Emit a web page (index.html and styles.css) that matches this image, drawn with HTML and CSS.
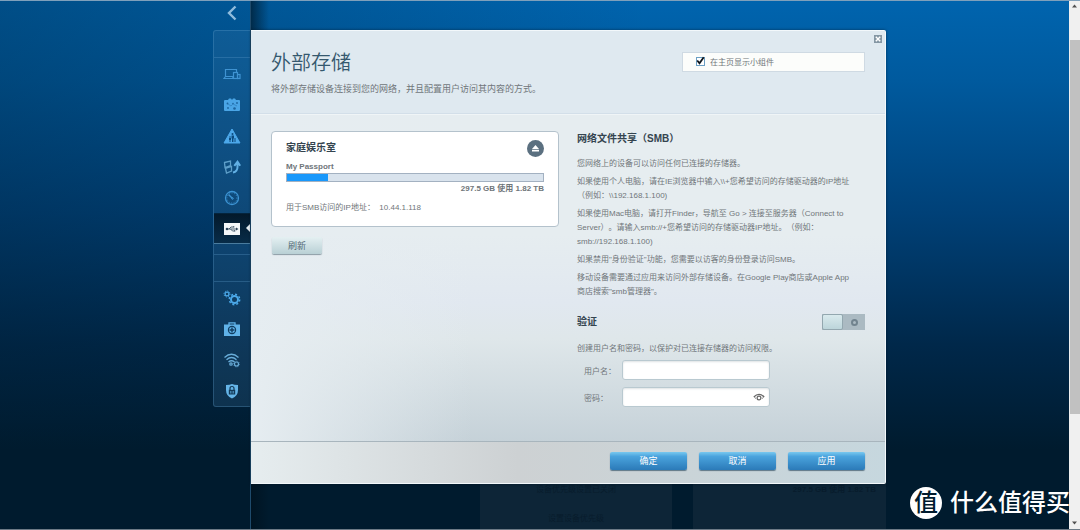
FILE: index.html
```html
<!DOCTYPE html>
<html lang="zh-CN">
<head>
<meta charset="utf-8">
<title>外部存储</title>
<link rel="stylesheet" href="styles.css">
</head>
<body>
<div class="page">
  <aside class="side">
    <button class="collapse" aria-label="收起">
      <svg width="10" height="16" viewBox="0 0 10 16"><path d="M8.500 1.500 2 8l6.500 6.500" fill="none" stroke="#8fbcdc" stroke-width="2.400"/></svg>
    </button>
    <nav class="rail">
      <div class="rail-blank"></div>
      <a class="item" href="#" aria-label="设备列表"><svg width="18" height="14" viewBox="0 0 18 14" fill="none" stroke="#3f93d2" stroke-width="1.200"><path d="M2.500 9.500v-7h11V5M1 11.500h9.500l-1-2h-7z"/><rect x="10.500" y="5.500" width="4" height="6"/><rect x="14.500" y="7.500" width="2.500" height="4"/></svg></a>
      <a class="item" href="#" aria-label="访客访问"><svg width="18" height="16" viewBox="0 0 18 16"><path d="M1 4q0-1 1-1h3l1-1.500h2L9 3l1-1.500h2L13 3h3q1 0 1 1v9q0 1-1 1H2q-1 0-1-1z" fill="#4aa5e6"/><g fill="#1c649f"><circle cx="4.500" cy="6.500" r=".9"/><circle cx="10" cy="6.500" r=".8"/><circle cx="14" cy="6" r=".9"/><circle cx="5" cy="11" r=".9"/><circle cx="11.500" cy="11.500" r="1.300"/></g><path d="m5 7 3 2 2-2m0 0 4 2" fill="none" stroke="#2d7dbc" stroke-width=".7"/></svg></a>
      <a class="item" href="#" aria-label="家长控制"><svg width="18" height="16" viewBox="0 0 18 16"><path d="M9 1 17 15H1z" fill="#4ca8ea" stroke="#4ca8ea" stroke-linejoin="round"/><g fill="#0c4b7e"><circle cx="9.500" cy="6" r="1"/><path d="M8.500 7.500h2.500v3h-.6V14H9v-3.500h-.5zM6 10h2v2h-.5v2h-1v-2H6zM11.500 10h1v4h-1z"/><circle cx="7" cy="9" r=".8"/></g></svg></a>
      <a class="item" href="#" aria-label="媒体优先级"><svg width="18" height="16" viewBox="0 0 18 16" fill="none"><path d="m1.500 3.500 6-1.500v4.500l-5.500 2zM2.500 9.500l6-2v4.500l-5 2z" stroke="#5e9fc9" stroke-width="1.300"/><path d="M10 13.500q4.500-1 4.500-5.500V4m-3.200 2.800 3.200-4 2.700 4" stroke="#62b0e4" stroke-width="2"/></svg></a>
      <a class="item" href="#" aria-label="网速测试"><svg width="16" height="16" viewBox="0 0 16 16" fill="none" stroke="#3d94d4"><circle cx="8" cy="8" r="6.500" stroke-width="1.300"/><circle cx="8" cy="8" r="5" stroke-dasharray="1 1.500" stroke-width=".8"/><path d="m4.500 4.500 4 4" stroke-width="1.400"/><circle cx="8.500" cy="8.500" r=".8"/></svg></a>
      <a class="item active" href="#" aria-label="外部存储" aria-current="page"><svg width="16" height="12" viewBox="0 0 16 12"><path d="M0 0h16v12H0z" fill="#f4f7f9"/><g fill="none" stroke="#3a5063"><path d="M3 6h9M5 6l2-2h2M6.500 6l2 2h1.500" stroke-width=".9"/></g><g fill="#2b4256"><circle cx="3" cy="6" r="1.300"/><path d="m12 4.500 2.500 1.500-2.500 1.500zM9 3.300h1.300v1.300H9zM10 7.300h1.300v1.300H10z"/></g></svg></a>
      <div class="rail-gap"></div>
      <div class="rail-blank"></div>
      <a class="item" href="#" aria-label="连接"><svg width="18" height="16" viewBox="0 0 18 16" fill="none" stroke="#4ba8e8"><circle cx="4" cy="4" r="1.900" stroke-width="1.200"/><circle cx="4" cy="4" r="3" stroke-width="1" stroke-dasharray="1.200 1.150"/><circle cx="11.500" cy="9.500" r="3.500" stroke-width="2"/><circle cx="11.500" cy="9.500" r="5.200" stroke-width="1.500" stroke-dasharray="2 2.080"/></svg></a>
      <a class="item" href="#" aria-label="故障排除"><svg width="16" height="14" viewBox="0 0 16 14"><path d="M5 3V.8h6V3" fill="none" stroke="#60b2e8" stroke-width="1.300"/><path d="M0 2.500h16V14H0z" fill="#60b2e8"/><circle cx="8" cy="8" r="4.200" fill="#103d60"/><circle cx="8" cy="8" r="3" fill="#60b2e8"/><path d="M8 5.500v5M5.500 8h5" stroke="#103d60" stroke-width="1.400"/></svg></a>
      <a class="item" href="#" aria-label="无线"><svg width="18" height="16" viewBox="0 0 18 16" fill="none" stroke="#68acd8" stroke-width="1.300"><path d="M1.500 5.500q7-6.500 14 0M3.500 7.800q5-4.500 10 0M5.500 10q3-2.600 6 0"/><circle cx="8" cy="12" r="1.200"/><circle cx="13.500" cy="12" r="2" stroke-width="1.200"/><circle cx="13.500" cy="12" r="2.900" stroke-width=".7" stroke-dasharray="1.200 1"/></svg></a>
      <a class="item" href="#" aria-label="安全"><svg width="14" height="16" viewBox="0 0 14 16"><path d="M1 2q4 0 6-1 2 1 6 1v5q0 6-6 8.500Q1 13 1 7z" fill="#65b5e8"/><path d="M5 7V5.500q0-2 2-2t2 2V7" fill="none" stroke="#123a58" stroke-width="1.200"/><path d="M3.800 6.800h6.400v4.700H3.800z" fill="#123a58"/><path d="M7 8v2.500M5.500 8v2.500M8.500 8v2.500" stroke="#65b5e8" stroke-width=".6"/></svg></a>
    </nav>
  </aside>

  <div class="main">
    <main class="panel">
      <header class="head">
        <div>
          <h1>外部存储</h1>
          <p class="lead">将外部存储设备连接到您的网络，并且配置用户访问其内容的方式。</p>
        </div>
        <label class="widget"><input type="checkbox" checked><svg class="tick" width="9" height="9" viewBox="0 0 9 9"><path d="m1.200 4.500 2.300 2.700 4.200-6" fill="none" stroke="#10161c" stroke-width="1.800"/></svg><span>在主页显示小组件</span></label>
        <button class="close" aria-label="关闭"><svg width="8" height="8" viewBox="0 0 8 8"><path d="M0 0h8v8H0z" fill="#8597a4"/><path d="m1.800 1.800 4.400 4.400m0-4.400L1.800 6.200" stroke="#fff" stroke-width="1.400"/></svg></button>
      </header>

      <div class="content">
        <section>
          <div class="drive">
            <div class="drive-top">
              <h2>家庭娱乐室</h2>
              <button class="eject" aria-label="弹出"><svg width="9" height="9" viewBox="0 0 9 9" fill="#fff"><path d="M4.500 1 8 5H1zM1 5.700h7v1.800H1z"/></svg></button>
            </div>
            <p class="name">My Passport</p>
            <div class="bar"><div class="fill" style="width:16%"></div></div>
            <p class="usage">297.5 GB 使用 1.82 TB</p>
            <p class="ip">用于SMB访问的IP地址：&nbsp; <span>10.44.1.118</span></p>
          </div>
          <button class="refresh">刷新</button>
        </section>

        <section class="info">
          <h2>网络文件共享（SMB）</h2>
          <p>您网络上的设备可以访问任何已连接的存储器。</p>
          <p>如果使用个人电脑，请在IE浏览器中输入\\+您希望访问的存储驱动器的IP地址<br>（例如：\\192.168.1.100)</p>
          <p>如果使用Mac电脑，请打开Finder，导航至 Go &gt; 连接至服务器（Connect to<br>Server）。请输入smb://+您希望访问的存储驱动器IP地址。（例如：<br>smb://192.168.1.100)</p>
          <p>如果禁用"身份验证"功能，您需要以访客的身份登录访问SMB。</p>
          <p>移动设备需要通过应用来访问外部存储设备。在Google Play商店或Apple App<br>商店搜索"smb管理器"。</p>
          <div class="auth">
            <h2 id="auth">验证</h2>
            <button class="switch" role="switch" aria-checked="false" aria-labelledby="auth"><span class="knob"></span><span class="off"><i></i></span></button>
          </div>
          <p class="hint">创建用户名和密码，以保护对已连接存储器的访问权限。</p>
          <div class="field"><label for="user">用户名：</label><input id="user" type="text"></div>
          <div class="field"><label for="pass">密码：</label><span class="pass"><input id="pass" type="password"><button class="eye" aria-label="显示密码"><svg width="12" height="9" viewBox="0 0 12 9" fill="none" stroke="#666"><path d="M.8 4Q6-1.200 11.200 4" stroke-width="1.300"/><circle cx="6" cy="5" r="1.900" stroke-width="1.200"/><path d="m1.500 4.500 1.500 1m7.500-1-1.500 1" stroke-width=".8"/></svg></button></span></div>
        </section>
      </div>

      <footer class="foot">
        <button>确定</button><button>取消</button><button>应用</button>
      </footer>
    </main>
    <div class="behind">
      <div class="tile"><p>设备优先级设置已关闭</p><p>设置设备优先级</p></div>
      <div class="tile right"><p>297.5 GB 使用 1.82 TB</p></div>
    </div>
  </div>

  <div class="scroll">
    <svg width="11" height="10" viewBox="0 0 11 10"><path d="m3 6.500 2.500-3 2.500 3z" fill="#505050"/></svg>
    <div class="thumb"></div>
    <svg width="11" height="10" viewBox="0 0 11 10"><path d="m3 3.500 2.500 3 2.500-3z" fill="#505050"/></svg>
  </div>
  <div class="mark"><span class="logo">值</span><span>什么值得买</span></div>
</div>
</body>
</html>
```

FILE: styles.css
```css
* { box-sizing: border-box; }
body {
  margin: 0;
  font-family: "Liberation Sans", "Noto Sans CJK SC", sans-serif;
  font-size: 8px;
  text-spacing-trim: space-all;
  color: #70767a;
}
h1, h2, p { margin: 0; }
button { font: inherit; padding: 0; border: 0; cursor: pointer; }
svg { display: block; }

.page {
  position: relative;
  min-height: 100vh;
  overflow: hidden;
  display: grid;
  grid-template-columns: minmax(0, 213fr) 38px minmax(0, 635fr) minmax(0, 183fr) 11px;
  background:
    linear-gradient(90deg, rgba(0, 27, 46, .3), rgba(0, 27, 46, 0) 60%),
    linear-gradient(#0064ae 0, #005a9e 15%, #004178 40%, #00284a 65%, #001b2e 85%);
  border-top: 1px solid #7fa0bb;
  border-bottom: 1px solid #6d7a86;
}

.side { grid-column: 2; border-right: 1px solid #1e4a6b; }
.collapse {
  display: flex;
  align-items: center;
  justify-content: center;
  width: 100%;
  height: 29px;
  padding-bottom: 6px;
  background: none;
}
.rail {
  border: 1px solid rgba(100, 160, 205, .3);
  border-right: 0;
  border-radius: 3px 0 0 3px;
  background: rgba(70, 130, 175, .2);
}
.rail-blank { height: 27px; border-bottom: 1px solid rgba(100, 160, 205, .3); }
.rail-gap { height: 11px; border-bottom: 1px solid rgba(100, 160, 205, .3); }
.item { display: flex; align-items: center; justify-content: center; height: 31px; }
.item.active {
  position: relative;
  background: linear-gradient(#03192b, #082c48);
  border-top: 1px solid #04243d;
  border-bottom: 1px solid #4a7c9e;
}
.item.active::after {
  content: "";
  position: absolute;
  right: 0;
  top: 10px;
  border: 4px solid transparent;
  border-right-color: #e6edf1;
  border-left: 0;
}

.main {
  grid-column: 3;
  display: flex;
  flex-direction: column;
  padding-top: 29px;
  background: linear-gradient(90deg, rgba(0, 15, 25, .6), rgba(0, 15, 25, 0) 18px);
}
.panel {
  position: relative;
  border: 1px solid #f3f8fb;
  border-left: 0;
  border-radius: 0 2px 2px 0;
  box-shadow: 0 0 3px rgba(0, 20, 35, .6);
  background:
    linear-gradient(90deg, #e6edf1, rgba(230, 237, 241, 0) 35%),
    linear-gradient(#e6edf0 0, #e6edf0 45%, #e1e8f0 60%, #dfe7ea 68%, #c5d1d8 91%, #c5d1d8 100%);
}
.head {
  display: flex;
  justify-content: space-between;
  align-items: flex-start;
  height: 83px;
  padding: 18px 20px 0;
  background: #dfe9f0;
  border-bottom: 1px solid #d3dfe9;
  box-shadow: 0 1px #f0f5f7;
}
h1 {
  font-weight: 350;
  font-size: 20px;
  line-height: 28px;
  color: #35586e;
}
.lead { font-size: 9px; line-height: 24px; }
.widget {
  position: relative;
  display: flex;
  align-items: center;
  gap: 5px;
  width: 183px;
  height: 20px;
  margin-top: 3px;
  padding: 0 0 2px 13px;
  background: #fcfdfb;
  border: 1px solid #cfdae3;
}
.widget input {
  appearance: none;
  width: 9px;
  height: 9px;
  margin: 0;
  background: #fff;
  border: 1px solid #6b9fc4;
}
.tick { position: absolute; left: 13px; top: 3px; pointer-events: none; }
.close { position: absolute; right: 3px; top: 4px; background: none; }

.content {
  display: grid;
  grid-template-columns: minmax(0, 1fr) minmax(0, 1fr);
  gap: 18px;
  padding: 17px 20px 27px;
}
h2 { font-size: 10px; line-height: 16px; color: #34444f; }
.drive {
  height: 96px;
  padding: 8px 14px;
  background: #fff;
  border: 1px solid #b4c2cc;
  border-radius: 4px;
}
.drive-top { display: flex; justify-content: space-between; }
.eject {
  display: grid;
  place-items: center;
  width: 17px;
  height: 17px;
  border-radius: 50%;
  background: #5b7080;
}
.name, .usage { font-weight: bold; line-height: 14px; }
.name { margin-top: 4px; line-height: 12px; }
.bar { height: 9px; background: #d9e3ed; border: 1px solid #a3b1c1; }
.fill { height: 100%; background: #1998fb; }
.usage { text-align: right; }
.ip { margin-top: 5px; line-height: 14px; }
.refresh {
  width: 50px;
  height: 17px;
  margin: 10px 0 0 1px;
  font-size: 9px;
  line-height: 16px;
  color: #536a77;
  border-radius: 2px;
  background: linear-gradient(#e4f0f2, #b9d0d5);
  box-shadow: 0 1px 1px #8b9ca5;
}
.info > p { margin-top: 4px; line-height: 14px; white-space: nowrap; }
.info > h2 { margin-bottom: 10px; }
.auth {
  display: flex;
  justify-content: space-between;
  align-items: center;
  margin-top: 15px;
}
.switch {
  display: flex;
  width: 43px;
  height: 16px;
  background: #abbac2;
}
.knob {
  width: 21px;
  height: 16px;
  border: 1px solid #93a7af;
  border-radius: 2px;
  background: linear-gradient(#d9eaed, #bcd5da);
}
.off { flex: 1; display: grid; place-items: center; height: 16px; }
.off i { width: 7px; height: 7px; border: 2px solid #71838e; border-radius: 50%; }
.info > .hint { margin: 12px 0 4px; }
.field {
  display: grid;
  grid-template-columns: 38px 148px;
  align-items: center;
  margin: 0 0 7px 7px;
}
.field input {
  display: block;
  width: 100%;
  height: 20px;
  padding: 0 6px;
  font: inherit;
  background: #fff;
  border: 1px solid #b9c9d0;
  border-radius: 3px;
  box-shadow: inset 0 1px 2px rgba(90, 110, 120, .2);
}
.pass { position: relative; }
.eye { position: absolute; right: 5px; top: 6px; background: none; }

.foot {
  display: flex;
  justify-content: flex-end;
  gap: 12px;
  padding: 10px 20px 13px;
  border-top: 1px solid #a8b5bd;
  background: linear-gradient(90deg, #e6edef, #cdd1d3 42%, #cbd3d6 60%, #c6d7de);
}
.foot button {
  width: 77px;
  height: 18px;
  font-size: 9px;
  line-height: 16px;
  color: #fff;
  border-radius: 2px;
  background: linear-gradient(#79c8ef, #4aa3dd 25%, #2b7ab8);
  box-shadow: 0 1px 1px #5e7686;
}

.behind {
  flex: 1;
  display: grid;
  grid-template-columns: minmax(0, 193fr) minmax(0, 193fr);
  gap: 21px;
  padding-left: 36%;
}
.tile { background: #0d2537; color: #081c2c; text-align: center; }
.tile p { line-height: 12px; }
.tile p + p { margin-top: 17px; }
.tile.right { text-align: right; padding-right: 10px; font-weight: bold; }

.scroll {
  grid-column: 5;
  display: flex;
  flex-direction: column;
  padding-bottom: 1px;
  background: #f0f0f0;
}
.thumb { flex: 0 0 71%; margin: 29px 0 auto 1px; background: #c1c1c1; }
.mark {
  position: absolute;
  right: 10px;
  bottom: 9px;
  display: flex;
  align-items: center;
  gap: 8px;
  font-size: 24px;
  line-height: 34px;
  font-weight: 500;
  color: #fff;
}
.logo {
  width: 32px;
  height: 32px;
  border-radius: 50%;
  background: #fff;
  color: #001b2e;
  line-height: 31px;
  text-align: center;
}
```
